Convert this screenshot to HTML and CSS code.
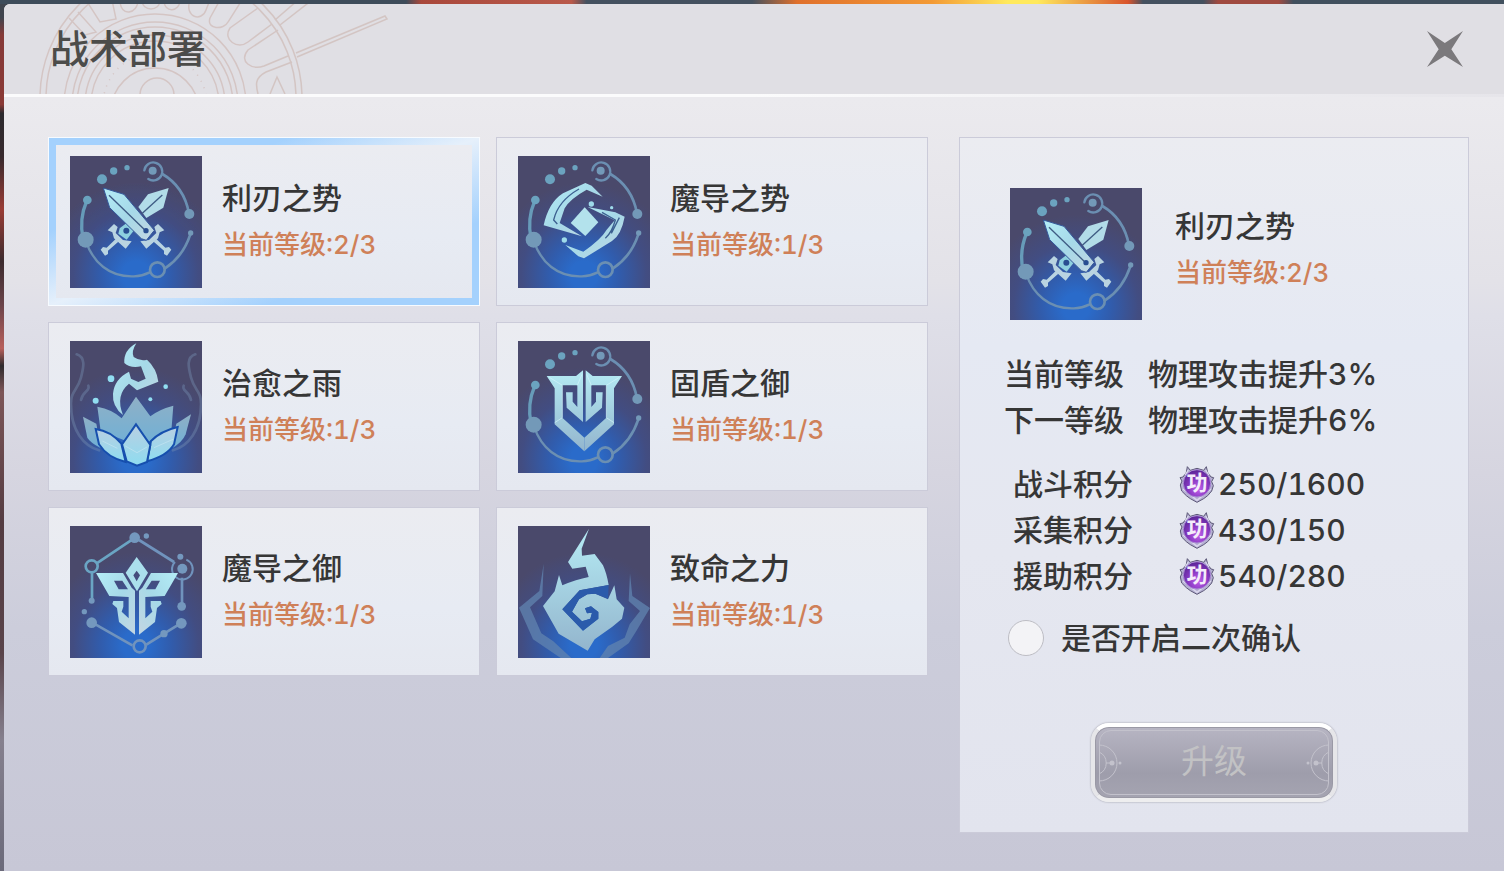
FILE: index.html
```html
<!DOCTYPE html>
<html lang="zh-CN">
<head>
    <meta charset="UTF-8">
    <meta name="viewport" content="width=device-width, initial-scale=1.0">
    <title>战术部署</title>
    <link rel="stylesheet" href="styles.css">
</head>
<body>
    <!-- shared shapes -->
    <svg class="defs" aria-hidden="true">
        <defs>
            <linearGradient id="ice" x1="0" y1="0" x2="1" y2="1">
                <stop offset="0" stop-color="#b4edf7"/>
                <stop offset="0.5" stop-color="#a6d9e8"/>
                <stop offset="1" stop-color="#c3d6e2"/>
            </linearGradient>
            <linearGradient id="iceDown" x1="0" y1="0" x2="0" y2="1">
                <stop offset="0" stop-color="#b5ebf4"/>
                <stop offset="1" stop-color="#93b5cd"/>
            </linearGradient>
            <linearGradient id="petal" x1="0" y1="0" x2="0" y2="1">
                <stop offset="0" stop-color="#8fb0c6"/>
                <stop offset="1" stop-color="#6fb0d6"/>
            </linearGradient>
            <linearGradient id="petalFront" x1="0" y1="0" x2="0" y2="1">
                <stop offset="0" stop-color="#b9cfe2"/>
                <stop offset="1" stop-color="#8edcf0"/>
            </linearGradient>
            <radialGradient id="gem" cx="0.55" cy="0.7" r="0.7">
                <stop offset="0" stop-color="#c260ea"/>
                <stop offset="0.5" stop-color="#8a3ac4"/>
                <stop offset="1" stop-color="#5a2596"/>
            </radialGradient>
        </defs>
        <symbol id="orbit" viewBox="33 33 396 396">
            <g fill="none" stroke="#6b8fb2" stroke-linecap="round">
                <path d="M310 87Q375 125 390 205" stroke-width="8"/>
                <path d="M256 76A27 27 0 1 1 268 102" stroke-width="7"/>
                <path d="M83 168Q60 222 72 280" stroke-width="10" stroke="#679bb9"/>
                <path d="M82 292C102 350 150 397 225 394Q250 393 272 382" stroke-width="7"/>
                <path d="M318 370Q372 335 394 268" stroke-width="8"/>
                <circle cx="295" cy="374" r="22" stroke-width="8"/>
            </g>
            <g fill="#7399b8">
                <circle cx="391" cy="207" r="15"/>
                <circle cx="281" cy="77" r="12"/>
                <circle cx="395" cy="264" r="8"/>
                <circle cx="80" cy="284" r="24"/>
            </g>
            <g fill="#6ba3bf">
                <circle cx="204" cy="68" r="8"/>
                <circle cx="164" cy="78" r="11"/>
                <circle cx="129" cy="103" r="15"/>
                <circle cx="85" cy="165" r="13"/>
            </g>
        </symbol>
        <symbol id="swords" viewBox="33 33 396 396">
            <use href="#orbit" x="33" y="33" width="396" height="396"/>
            <g id="hilt" fill="#b9d4e1">
                <path d="M297 237L316 256 302 262 297 280 262 311 244 289 270 285 292 264 286 246Z"/>
                <path d="M284 290L292 282 319 308 330 306 337 314 324 332 315 327 315 317Z"/>
            </g>
            <use href="#hilt" transform="translate(462 0) scale(-1 1)"/>
            <path d="M329 129L267 148 238 186 262 219 313 188Z" fill="#b2dce8"/>
            <path d="M310 150L250 205" stroke="#3e5b83" stroke-width="4"/>
            <path d="M182 250L208 230 228 252 203 284 178 266Z" fill="#8ed0df"/>
            <circle cx="202" cy="257" r="9" fill="#294e91"/>
            <path d="M133 129L195 148 286 256 262 286 247 281 152 188Z" fill="url(#ice)" stroke="#34589a" stroke-width="3"/>
            <path d="M150 151L260 257" stroke="#3e5b83" stroke-width="4"/>
            <circle cx="261" cy="257" r="8" fill="#294e91"/>
        </symbol>
        <symbol id="vortex" viewBox="30 33 396 396">
            <use href="#orbit" x="30" y="33" width="396" height="396"/>
            <g fill="url(#ice)">
                <path d="M232 114L251 122 284 155 236 134Q185 162 170 190L155 234 222 274 107 241Q122 172 165 145Z"/>
                <path d="M239 186L322 202 350 215Q340 270 312 288L228 340 211 334 172 300 226 320Q280 282 296 254L320 226Z"/>
                <path d="M230 187L271 232 232 273 188 234Z" fill="#b3e2ec"/>
            </g>
            <path d="M213 132Q150 168 137 225L148 237M282 202L322 225Q312 262 292 280M334 218L310 265" fill="none" stroke="#3d6191" stroke-width="4"/>
            <g fill="#9edbea">
                <circle cx="250" cy="177" r="8"/>
                <circle cx="311" cy="188" r="5"/>
                <circle cx="169" cy="285" r="8"/>
            </g>
        </symbol>
        <symbol id="lotus" viewBox="33 30 396 396">
            <g fill="none" stroke="#7892b5" stroke-width="8" stroke-linecap="round" opacity="0.4">
                <path d="M53 70C85 80 70 120 66 140C55 180 35 180 36 220C36 300 75 345 120 358"/>
                <path d="M66 207C70 180 95 180 88 164"/>
                <path d="M409 70C377 80 392 120 396 140C407 180 427 180 426 220C426 300 387 345 342 358"/>
                <path d="M396 207C392 180 367 180 374 164"/>
            </g>
            <path d="M232 37Q216 62 224 78 244 92 264 86 293 112 298 152L234 178 210 158Q168 192 192 252 159 226 162 188 166 144 210 122L216 143 238 153 260 143 246 106Q213 112 196 96 193 58 232 37Z" fill="url(#ice)"/>
            <g fill="url(#petal)">
                <path d="M72 257L112 278 125 351Q94 335 85 320Z"/>
                <path d="M396 250L352 278 335 354Q370 335 380 310Z"/>
                <path d="M115 227Q160 235 188 262L231 197 274 256Q300 235 343 224L337 300 240 345 125 300Z"/>
            </g>
            <g fill="url(#petalFront)" stroke="#164fae" stroke-width="6">
                <path d="M110 294Q155 300 187 338L200 393Q145 380 120 340Z"/>
                <path d="M356 288Q305 300 276 330L264 391Q325 375 345 340Z"/>
                <path d="M231 280L274 342 264 393 234 404 203 391 189 340Z"/>
            </g>
            <path d="M199 345L234 365 264 348M130 330L175 352M342 325L285 350" fill="none" stroke="#cae7f3" stroke-width="3" opacity="0.6"/>
            <g fill="#91def1">
                <circle cx="156" cy="143" r="10"/>
                <circle cx="110" cy="209" r="9"/>
                <circle cx="320" cy="167" r="7"/>
                <circle cx="274" cy="205" r="6"/>
            </g>
        </symbol>
        <symbol id="shield" viewBox="30 30 396 396">
            <use href="#orbit" x="30" y="30" width="396" height="396"/>
            <g id="shieldHalf">
                <path d="M116 135L204 135 225 118 225 273 176 230 174 184 194 184 194 212 208 228 208 163 163 163 163 260 229 320 229 361 140 280 140 172Z" fill="url(#iceDown)"/>
                <path d="M124 139L163 163 163 260 140 275M208 163L222 130" fill="none" stroke="#d5f5fa" stroke-width="2"/>
            </g>
            <use href="#shieldHalf" transform="translate(458 0) scale(-1 1)"/>
        </symbol>
        <symbol id="mask" viewBox="33 30 396 396">
            <g fill="none" stroke="#7093bd" stroke-width="8">
                <path d="M240 72L345 138M369 185V265M100 320L220 388M262 386L315 353 365 322"/>
                <path d="M113 142L225 67M99 168V250" stroke="#6aa5c4"/>
                <circle cx="98" cy="151" r="18" stroke="#6aa5c4"/>
                <path d="M348 138A31 31 0 1 0 382 131" stroke-width="6"/>
                <circle cx="242" cy="391" r="18"/>
            </g>
            <g fill="#7498be">
                <circle cx="227" cy="65" r="16"/>
                <circle cx="262" cy="60" r="8"/>
                <circle cx="364" cy="122" r="9"/>
                <circle cx="370" cy="158" r="15"/>
                <circle cx="368" cy="271" r="13"/>
                <circle cx="367" cy="322" r="16"/>
                <circle cx="315" cy="353" r="11"/>
                <circle cx="98" cy="320" r="16"/>
                <circle cx="76" cy="287" r="8"/>
                <circle cx="98" cy="254" r="9"/>
            </g>
            <path id="maskHalf" d="M111 171L192 171 218 215 228 224 228 356 180 318 174 276 160 264 163 255 193 255 193 272 188 287 209 307 209 243 151 240ZM165 194L179 220 207 220 190 194Z" fill="url(#ice)" fill-rule="evenodd"/>
            <use href="#maskHalf" transform="translate(468 0) scale(-1 1)"/>
            <path d="M233 123L267 170 234 226 200 170ZM233 164L223 178 233 196 243 178Z" fill="#aadfec" fill-rule="evenodd"/>
        </symbol>
        <symbol id="flame" viewBox="30 30 396 396">
            <g fill="#6184b0" opacity="0.75">
                <path d="M107 143L103 240 66 274 100 352 135 375 190 426 158 426 75 370 33 275 94 225Z"/>
                <path d="M366 172L373 240 426 276 385 345 362 382 300 426 275 426 300 390 350 365 365 325 396 285 362 255Z"/>
            </g>
            <path d="M243 38L221 98 222 119 260 114 285 148Q296 172 302 207L215 223 163 280 225 344 271 308 271 288 249 271 231 277 237 292 252 290 247 308 222 316 192 287 213 250 238 235 262 233 300 250 319 208 326 250 349 275 342 308 313 332 260 370 239 404 152 353 105 270 140 226 153 177 163 208 Q205 190 242 183L233 152 193 158 180 138Z" fill="url(#iceDown)"/>
            <path d="M163 280L225 344 271 308 271 288 249 271 231 277 237 292 252 290 247 308 222 316 192 287 213 250 238 235 262 233 300 248 302 207 215 223Z" fill="#2b5bab"/>
        </symbol>
        <symbol id="medal" viewBox="0 0 108 114">
            <path d="M54 112L34 101 22 92 8 78 4 60 9 48 3 38 12 36 22 22 25 5 34 16 54 10 74 16 82 5 86 22 96 36 104 38 98 50 103 62 98 78 86 92 74 101Z" fill="#b5b1d2" stroke="#5c5877" stroke-width="3"/>
            <path d="M18 30L28 15M90 30L80 15M12 72L54 106 96 72" stroke="#dcd9ee" stroke-width="4" fill="none"/>
            <circle cx="54" cy="55" r="41" fill="url(#gem)" stroke="#a98bd3" stroke-width="3"/>
        </symbol>
    </svg>

    <main class="window">
        <header class="titlebar">
            <svg class="ornament" width="400" height="90" viewBox="0 4 400 90" aria-hidden="true">
                <g fill="none" stroke="#c8aca3" stroke-width="1.5">
                    <circle cx="171" cy="98" r="131"/>
                    <circle cx="171" cy="98" r="125"/>
                    <circle cx="155" cy="105" r="91"/>
                    <circle cx="155" cy="105" r="83"/>
                    <circle cx="155" cy="105" r="78"/>
                    <circle cx="155" cy="105" r="70"/>
                    <circle cx="155" cy="105" r="64"/>
                    <circle cx="155" cy="112" r="44"/>
                    <circle cx="157" cy="95" r="17"/>
                    <circle cx="155" cy="105" r="52" stroke-dasharray="1 6"/>
                    <path d="M296 53L385 16 387 19 297 57M275 20L298 0M280 25L312 0"/>
                    <path d="M69 18L85 35 96 32 78 12M86 0L100 22 116 19 112 0M120 0C120 18 138 14 138 0M142 0C142 12 160 12 160 0M164 0C164 14 180 12 180 0M190 0C184 18 202 22 206 10L210 0M220 0L210 18C206 30 224 30 228 22L242 0M258 8L230 28C222 40 238 50 248 42L272 24M278 30L248 50C238 62 252 70 264 66L288 56M292 62L266 72C254 78 256 86 258 94M270 94L277 77 285 94"/>
                </g>
            </svg>
            <h1>战术部署</h1>
            <button class="close" type="button" aria-label="关闭">
                <svg width="36" height="36" viewBox="263 95 105 105">
                    <path d="M263 95L315 130 368 95 334 148 368 200 315 167 263 200 297 148Z" fill="#7b797c"/>
                </svg>
            </button>
        </header>

        <div class="content">
            <div class="skills">
                <button class="card selected" type="button">
                    <svg class="icon" aria-hidden="true"><use href="#swords"/></svg>
                    <span class="info"><span class="name">利刃之势</span><span class="level">当前等级:2/3</span></span>
                </button>
                <button class="card" type="button">
                    <svg class="icon" aria-hidden="true"><use href="#vortex"/></svg>
                    <span class="info"><span class="name">魔导之势</span><span class="level">当前等级:1/3</span></span>
                </button>
                <button class="card" type="button">
                    <svg class="icon" aria-hidden="true"><use href="#lotus"/></svg>
                    <span class="info"><span class="name">治愈之雨</span><span class="level">当前等级:1/3</span></span>
                </button>
                <button class="card" type="button">
                    <svg class="icon" aria-hidden="true"><use href="#shield"/></svg>
                    <span class="info"><span class="name">固盾之御</span><span class="level">当前等级:1/3</span></span>
                </button>
                <button class="card" type="button">
                    <svg class="icon" aria-hidden="true"><use href="#mask"/></svg>
                    <span class="info"><span class="name">魔导之御</span><span class="level">当前等级:1/3</span></span>
                </button>
                <button class="card" type="button">
                    <svg class="icon" aria-hidden="true"><use href="#flame"/></svg>
                    <span class="info"><span class="name">致命之力</span><span class="level">当前等级:1/3</span></span>
                </button>
            </div>

            <section class="detail">
                <div class="summary">
                    <svg class="icon" aria-hidden="true"><use href="#swords"/></svg>
                    <div class="info"><h2 class="name">利刃之势</h2><span class="level">当前等级:2/3</span></div>
                </div>
                <dl class="effects">
                    <dt>当前等级</dt><dd>物理攻击提升3%</dd>
                    <dt>下一等级</dt><dd>物理攻击提升6%</dd>
                </dl>
                <dl class="points">
                    <dt>战斗积分</dt><dd><span class="medal"><svg aria-hidden="true"><use href="#medal"/></svg><b>功</b></span>250/1600</dd>
                    <dt>采集积分</dt><dd><span class="medal"><svg aria-hidden="true"><use href="#medal"/></svg><b>功</b></span>430/150</dd>
                    <dt>援助积分</dt><dd><span class="medal"><svg aria-hidden="true"><use href="#medal"/></svg><b>功</b></span>540/280</dd>
                </dl>
                <div class="confirm">
                    <input type="checkbox" id="confirm">
                    <label for="confirm">是否开启二次确认</label>
                </div>
                <button class="upgrade" type="button" disabled>
                    <svg width="26" height="40" viewBox="0 0 26 40" aria-hidden="true">
                        <path d="M0 2A18 18 0 0 1 0 38M0 9A12 12 0 0 1 0 31M7 20H13" fill="none" stroke="#c3c2cc"/>
                        <circle cx="13" cy="20" r="2.5" fill="#c3c2cc"/><circle cx="21" cy="20" r="1.5" fill="#c3c2cc"/>
                    </svg>
                    <span>升级</span>
                    <svg width="26" height="40" viewBox="0 0 26 40" aria-hidden="true">
                        <path d="M26 2A18 18 0 0 0 26 38M26 9A12 12 0 0 0 26 31M19 20H13" fill="none" stroke="#c3c2cc"/>
                        <circle cx="13" cy="20" r="2.5" fill="#c3c2cc"/><circle cx="5" cy="20" r="1.5" fill="#c3c2cc"/>
                    </svg>
                </button>
            </section>
        </div>
    </main>
</body>
</html>
```
FILE: styles.css
```css
* {
    box-sizing: border-box;
}
body {
    margin: 0;
    padding: 4px 0 0 4px;
    min-height: 100vh;
    display: flex;
    font-family: Inter, "Noto Sans CJK SC", sans-serif;
    font-weight: 500;
    font-size: 30px;
    font-variant-numeric: tabular-nums;
    color: #363636;
    background:
        linear-gradient(to right, #3e4c5a 27%, #a9483b 28%, #b9594a 38%, #44515f 39%, #44515f 50%, #e0702c 53%, #f39a35 62%, #ffe95c 67%, #ffe95c 69%, #d9542c 75%, #44515f 76%, #44515f 80%, #a04a40 81%, #a04a40 85%, #41505e 86%) top / 100% 4px no-repeat,
        linear-gradient(to bottom, #40454e 2%, #863a38 4%, #8a3a36 12%, #2c2a2e 13%, #37292d 18%, #9a3c35 24%, #3c2b2e 30%, #6b444a 35%, #b8605c 40%, #2f2b2e 42%, #7d5658 45%, #543c42 60%, #59434a 75%, #85808e 85%, #6b6a7a 100%);
}
button, input {
    font: inherit;
    font-variant-numeric: inherit;
    color: inherit;
}
h1, h2, dl, dd {
    margin: 0;
    font-weight: 500;
}
.defs {
    position: absolute;
    width: 0;
    height: 0;
}
.window {
    flex: 1;
    border-radius: 6px 0 0 0;
    background: linear-gradient(to bottom, #ebeaee 11%, #e3e2e8 32%, #dfdfe8 36%, #d6d5e0 54%, #cccddb 72%, #c7c7d6 100%);
    overflow: hidden;
}

/* title bar */
.titlebar {
    position: relative;
    display: flex;
    align-items: center;
    justify-content: space-between;
    height: 93px;
    padding: 0 41px 0 46px;
    background: #e0dfe4;
    border-bottom: 3px solid #f8f8fa;
    border-image: linear-gradient(to right, #fbfbfc 50%, #e6e5ea) 1;
}
.ornament {
    position: absolute;
    left: -4px;
    top: 0;
    opacity: 0.5;
}
h1 {
    position: relative;
    font-size: 39px;
    line-height: 48px;
    color: #4c4c4a;
}
.close {
    display: flex;
    padding: 0;
    border: 0;
    background: none;
    cursor: pointer;
}

.content {
    display: grid;
    grid-template-columns: 88fr 51fr;
    gap: 31px;
    align-items: start;
    padding: 40px 35px 37px 44px;
}
.skills {
    display: grid;
    grid-template-columns: 1fr 1fr;
    gap: 16px;
}
.card {
    display: flex;
    align-items: center;
    gap: 20px;
    height: 169px;
    padding: 0 21px;
    text-align: left;
    background: linear-gradient(#ebecf1, #e7ebf3 60%, #e5e8f0);
    border: 1px solid #cbcbd9;
    cursor: pointer;
}
.card.selected {
    padding: 0 14px;
    border: 8px solid #a4d1fd;
    border-image: linear-gradient(to bottom right, #a4d1fd 28%, #e6f0fb 50%, #a4d1fd 75%) 8;
    outline: 1px solid #f7fbff;
    outline-offset: -1px;
}
.icon {
    flex: none;
    width: 132px;
    height: 132px;
    background: radial-gradient(circle at 50% 90%, #2a6bca 10%, #315cac 26%, #424d82 46%, #4a496b 68%);
}
.info {
    display: flex;
    flex-direction: column;
}
.name {
    font-size: 30px;
    line-height: 46px;
}
.level {
    font-size: 26px;
    line-height: 48px;
    color: #cf8058;
}

/* right panel */
.detail {
    padding: 50px 44px 30px;
    background: linear-gradient(#ebecf1, #e5e9f3 30%, #e5e7f0 60%, #e2e4ee);
    border: 1px solid #cbcbd9;
}
.summary {
    display: flex;
    gap: 33px;
    padding-left: 6px;
}
.summary .info {
    padding-top: 15px;
}
.effects, .points {
    display: grid;
    grid-template-columns: max-content 1fr;
    line-height: 46px;
}
.effects {
    column-gap: 24px;
    margin-top: 31px;
}
.points {
    column-gap: 46px;
    margin-top: 18px;
    padding-left: 9px;
}
.points dd {
    display: flex;
    align-items: center;
    gap: 3px;
}
.medal {
    position: relative;
    width: 36px;
    height: 38px;
}
.medal svg {
    display: block;
    width: 36px;
    height: 38px;
}
.medal b {
    position: absolute;
    inset: 0;
    font-size: 21px;
    line-height: 36px;
    text-align: center;
    color: #f4ecfb;
}
.confirm {
    display: flex;
    align-items: center;
    gap: 17px;
    margin-top: 21px;
    padding-left: 4px;
    line-height: 36px;
}
.confirm input {
    appearance: none;
    width: 36px;
    height: 36px;
    margin: 0;
    border: 1px solid #bdbdc4;
    border-radius: 50%;
    background: #f3f3f6;
}
.confirm input:checked {
    background: radial-gradient(#6fb0f5 45%, #f3f3f6 50%);
}
.upgrade {
    position: relative;
    display: flex;
    align-items: center;
    justify-content: space-between;
    width: 246px;
    height: 79px;
    margin: 67px auto 0;
    padding: 0 4px;
    font-size: 33px;
    line-height: 40px;
    font-weight: 400;
    color: #c2c2c4;
    background: linear-gradient(#b7b5c3, #9e9dab 65%, #a5a4b1);
    border: 4px solid;
    border-color: #fff #e6e6e9 #eeeeef;
    border-radius: 18px;
    box-shadow: 0 0 2px #8f8e99, inset 0 0 0 1px #9a99a5;
}
.upgrade span {
    padding-bottom: 4px;
}
/* thin inner frame */
.upgrade::before {
    content: "";
    position: absolute;
    inset: 3px 4px;
    border: 1px solid #c3c2cc;
    border-radius: 12px;
}
```
